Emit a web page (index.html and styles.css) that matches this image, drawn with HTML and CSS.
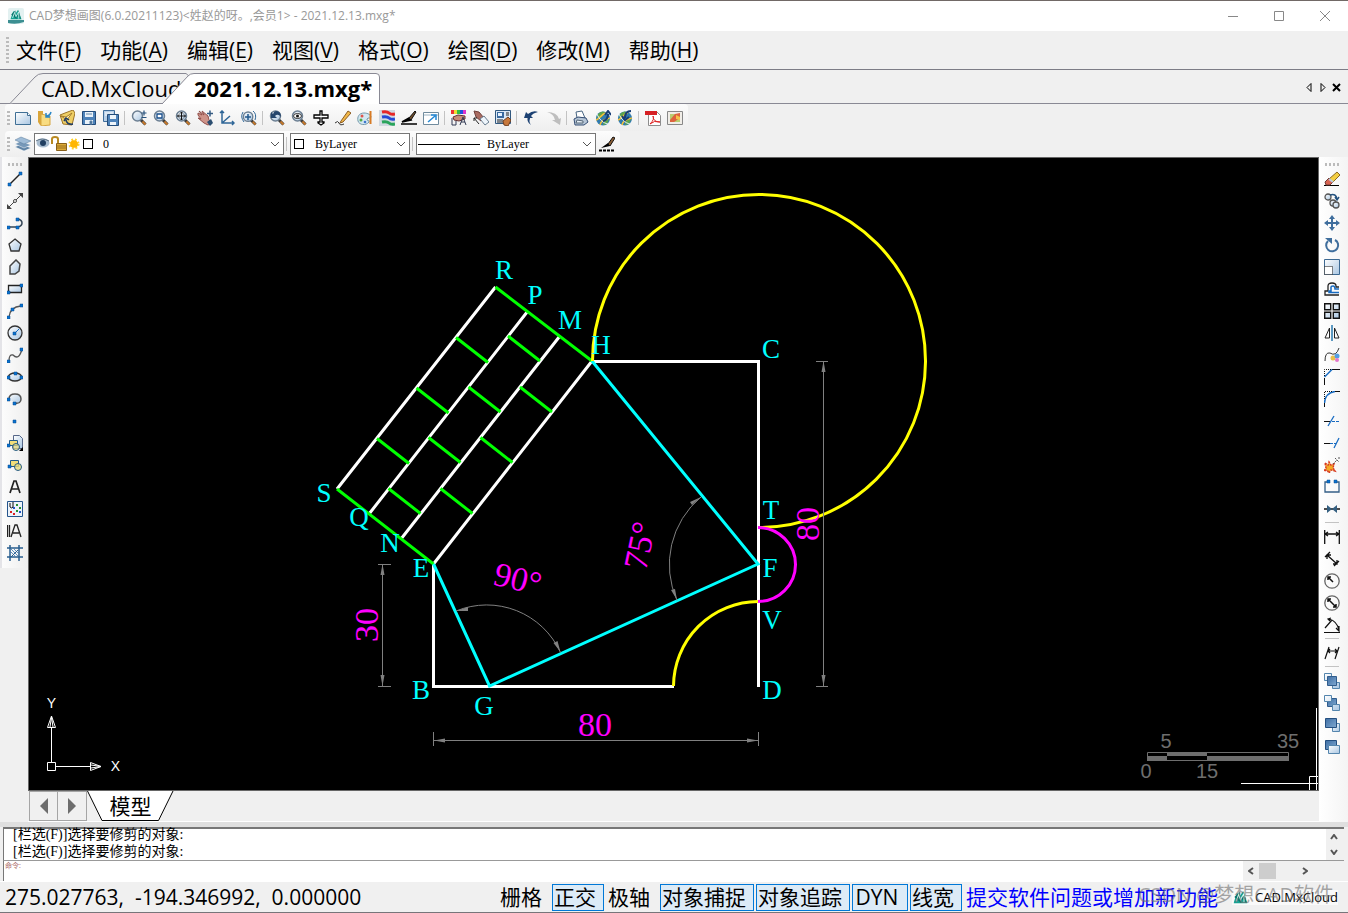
FILE: index.html
```html
<!DOCTYPE html>
<html lang="zh-CN">
<head>
    <meta charset="UTF-8">
    <meta name="viewport" content="width=device-width, initial-scale=1.0">
    <title>CAD梦想画图</title>
    <link rel="stylesheet" href="styles.css">
</head>
<body>
    <!-- shared gradients and icons -->
    <svg class="defs" aria-hidden="true">
        <defs>
            <linearGradient id="pale" x1="0" y1="0" x2="1" y2="1"><stop offset="0" stop-color="#fff"/><stop offset="1" stop-color="#a9c6e2"/></linearGradient>
            <linearGradient id="deep" x1="0" y1="0" x2="1" y2="1"><stop offset="0" stop-color="#3f6fa5"/><stop offset="1" stop-color="#7fa8d0"/></linearGradient>
            <symbol id="lens" viewBox="0 0 16 16"><path d="M9.500 9.500l5 5" stroke="#3b3b3b" stroke-width="3"/><path d="M11.500 11.500l3 3" stroke="#c77a2c" stroke-width="2"/><circle cx="6.500" cy="6" r="5" fill="url(#pale)" stroke="#6c7f92" stroke-width="1.500"/></symbol>
            <symbol id="globe" viewBox="0 0 16 16"><circle cx="8" cy="8.500" r="7" fill="#2f7bb0"/><path d="M2 5q4-5 8-3L7 7 3 9zM9 10l5-1-2 5-4 1z" fill="#5da54c"/><path d="M1 10c4-1 5-6 10-7M5 15c1-5 6-6 10-7" fill="none" stroke="#f2c13c" stroke-width="1.500"/><path d="M2 4c2 5 6 9 11 10" fill="none" stroke="#e8f3fa"/></symbol>
            <symbol id="logo" viewBox="0 0 16 16"><path d="M0 15L4 3l3 4 4-6 5 14z" fill="#16a394"/><path d="M1 8l6-6 2 13zM12 2l3 13-6-5z" fill="#0b756c"/><path d="M3 13L6 5l2 6 4-7v10" fill="none" stroke="#d8fffa" stroke-width="1.200"/></symbol>
        </defs>
    </svg>

    <div class="app">
        <header class="titlebar">
            <svg class="app-icon" viewBox="0 0 16 16"><rect width="16" height="16" rx="2" fill="#e3f1f1"/><path d="M0 12h16v2q-8 3-16 1z" fill="#3c8f92"/><use href="#logo" x="2" y="1" width="12" height="11"/></svg>
            <h1>CAD梦想画图(6.0.20211123)&lt;姓赵的呀。,会员1&gt; - 2021.12.13.mxg*</h1>
            <button aria-label="最小化"><svg viewBox="0 0 12 12"><path d="M1 6.500h10"/></svg></button>
            <button aria-label="最大化"><svg viewBox="0 0 12 12"><path d="M1.500 1.500h9v9h-9z"/></svg></button>
            <button aria-label="关闭"><svg viewBox="0 0 12 12"><path d="M1 1l10 10M11 1L1 11"/></svg></button>
        </header>

        <nav class="menubar">
            <span class="grip"></span>
            <button>文件(<u>F</u>)</button>
            <button>功能(<u>A</u>)</button>
            <button>编辑(<u>E</u>)</button>
            <button>视图(<u>V</u>)</button>
            <button>格式(<u>O</u>)</button>
            <button>绘图(<u>D</u>)</button>
            <button>修改(<u>M</u>)</button>
            <button>帮助(<u>H</u>)</button>
        </nav>

        <div class="tabbar">
            <button class="tab">
                <svg viewBox="0 0 180 31"><path d="M0 30.500L25 4Q28 .500 33 .500H176L180 4"/></svg>
                <span>CAD.MxCloud</span>
            </button>
            <button class="tab active">
                <svg viewBox="0 0 218 31"><path d="M0 31L26 3Q28 .500 32 .500H214Q217.500 .500 217.500 4V31"/></svg>
                <span>2021.12.13.mxg*</span>
            </button>
            <div class="tab-controls">
                <button aria-label="上一个"><svg viewBox="0 0 10 10"><path d="M7 1.500v8L3 5.500z"/></svg></button>
                <button aria-label="下一个"><svg viewBox="0 0 10 10"><path d="M3 1.500v8L7 5.500z"/></svg></button>
                <button aria-label="关闭标签"><svg viewBox="0 0 10 10"><path d="M1 2l7 7M8 2L1 9" stroke-width="2"/></svg></button>
            </div>
        </div>

        <div class="toolbar">
            <span class="grip"></span>
            <button class="tool" aria-label="新建"><svg viewBox="0 0 16 16"><path d="M.500 2.500h12l3 3v9H.500z" fill="url(#pale)" stroke="#3f6f95"/><path d="M12.500 2.500v3h3" fill="#fff" stroke="#3f6f95"/></svg></button>
            <button class="tool" aria-label="打开"><svg viewBox="0 0 16 16"><path d="M1 1h5v14H3l-2-3z" fill="#d9a53a"/><path d="M4 4l9 2v9l-9 1z" fill="#f8dc81" stroke="#d6a640"/><path d="M14 2q-1 4-5 4M9 3v4h4" fill="none" stroke="#2c86c5" stroke-width="1.500"/></svg></button>
            <button class="tool" aria-label="打开云图"><svg viewBox="0 0 16 16"><path d="M1 5l5-2 8-3 2 3-3 12-9-1z" fill="#efcf65" stroke="#9b7226"/><path d="M2 6l5 1 6-4-5 7z" fill="#fff1af" stroke="#a57b2d"/><path d="M14 14q-6 1-7-4M5 11l2-3 3 2" fill="none" stroke="#203c64" stroke-width="1.500"/></svg></button>
            <button class="tool" aria-label="保存"><svg viewBox="0 0 16 16"><path d="M1.500 1.500h13v13h-13z" fill="#4e83ba" stroke="#244d7b"/><path d="M4 2h8v5H4zM4 10h8v4H4z" fill="#eaf2f9"/><path d="M5 4h6M9 11h2v3H9z" stroke="#6288aa" fill="#345f8c"/></svg></button>
            <button class="tool" aria-label="全部保存"><svg viewBox="0 0 16 16"><path d="M.500 .500h11v11H.500z" fill="#b8d0e8" stroke="#3f6d9b"/><path d="M2 3h8M2 5h8" stroke="#fff"/><path d="M4.500 4.500h11v11h-11z" fill="#4e83ba" stroke="#244d7b"/><path d="M7 5h6v4H7zM7 12h6v3H7z" fill="#eef5fb"/></svg></button>
            <span class="sep"></span>
            <button class="tool" aria-label="实时缩放"><svg viewBox="0 0 16 16"><use href="#lens"/><path d="M10.500 3h5M13 .500v5M10.500 7.500h5" stroke="#27527d" stroke-width="1.200"/></svg></button>
            <button class="tool" aria-label="窗口缩放"><svg viewBox="0 0 16 16"><use href="#lens"/><path d="M4 4h5v4H4z" fill="#fff" stroke="#174d8a" stroke-width="1.300"/></svg></button>
            <button class="tool" aria-label="范围缩放"><svg viewBox="0 0 16 16"><use href="#lens"/><path d="M2.500 6h8M6.500 2v8M5 3.500L6.500 2 8 3.500M5 8.500L6.500 10 8 8.500M4 4.500L2.500 6 4 7.500M9 4.500L10.500 6 9 7.500" fill="none" stroke="#111"/></svg></button>
            <button class="tool" aria-label="平移"><svg viewBox="0 0 16 16"><path d="M1 3l4 2-3-4 5 4-2-4 6 5 1 4 3 3-4 2-4-2-6-5 3 1-3-4z" fill="#ce9389" stroke="#92504b"/><path d="M10 12l4-3 2 4-3 3z" fill="#2b4d70"/><path d="M10 3.500h6M13 .500v6" stroke="#355b82" stroke-width="1.500"/></svg></button>
            <button class="tool" aria-label="坐标系"><svg viewBox="0 0 16 16"><path d="M3 1v12h12M3 13l8-7M1 3l2-2 2 2M13 11l2 2-2 2" fill="none" stroke="#2f6697" stroke-width="1.500"/></svg></button>
            <button class="tool" aria-label="动态缩放"><svg viewBox="0 0 16 16"><use href="#lens" x="1" y="1" width="15" height="15"/><path d="M4 7h6M7 4v6" stroke="#22598d" stroke-width="1.500"/><path d="M2 2Q-1 7 3 12M12 1q4 3 2 9" fill="none" stroke="#2f6697"/></svg></button>
            <span class="sep"></span>
            <button class="tool" aria-label="上一视图"><svg viewBox="0 0 16 16"><use href="#lens"/><path d="M2 2v6h6L6 6q3-3 6 1 0-6-5-6-2 0-3 3z" fill="#25466d"/></svg></button>
            <button class="tool" aria-label="查看"><svg viewBox="0 0 16 16"><use href="#lens"/><ellipse cx="6.500" cy="6" rx="4" ry="2.500" fill="#fff" stroke="#333"/><circle cx="6.500" cy="6" r="1.500" fill="#111"/></svg></button>
            <button class="tool" aria-label="重生成"><svg viewBox="0 0 16 16"><path d="M7 1h2v4h6v3H9v4h2v1L8 15l-3-2v-1h2V8H1V5h6z" fill="#fff" stroke="#000" stroke-width="1.300"/></svg></button>
            <button class="tool" aria-label="编辑"><svg viewBox="0 0 16 16"><path d="M0 13q3-3 4 0t5 1" fill="none" stroke="#333"/><path d="M6 11L13 1l3 2-8 9-3 1z" fill="#f1b849" stroke="#8b5c22"/></svg></button>
            <button class="tool" aria-label="颜色"><svg viewBox="0 0 16 16"><path d="M7 3C2 3 0 7 1 11s8 5 11 1c1-2-3-1-2-3s4 0 4-2-3-4-7-4z" fill="#d3e7f2" stroke="#749aab"/><circle cx="5" cy="6" r="1.500" fill="#de564c"/><circle cx="4" cy="10" r="1.500" fill="#51a847"/><circle cx="8" cy="12" r="1.300" fill="#3d76ce"/><path d="M13.500 1v13" stroke="#d77b25" stroke-width="2"/></svg></button>
            <button class="tool" aria-label="图层颜色"><svg viewBox="0 0 16 16"><path d="M0 0h16v16H0z" fill="#d1d9e1"/><path d="M3 2q5-1 7 1t6 1" stroke="#e62727" stroke-width="3" fill="none"/><path d="M3 7q5-1 7 1t6 1" stroke="#2549d6" stroke-width="3" fill="none"/><path d="M3 12q5-1 7 1t6 1" stroke="#29a45b" stroke-width="3" fill="none"/></svg></button>
            <button class="tool" aria-label="线型"><svg viewBox="0 0 16 16"><path d="M0 14h16M1 12l7-4 2 2z" stroke="#000" stroke-width="1.500"/><path d="M8 8l6-7 1 1-5 8z" fill="#714d28" stroke="#111"/></svg></button>
            <button class="tool" aria-label="全屏"><svg viewBox="0 0 16 16"><path d="M.500 2.500h15v12H.500z" fill="#fff" stroke="#708b9d"/><path d="M1 5h14" stroke="#9bb2c1"/><path d="M5 12l7-6M8 5h5v5" fill="none" stroke="#2588d4" stroke-width="1.500"/></svg></button>
            <span class="sep"></span>
            <button class="tool" aria-label="文字颜色"><svg viewBox="0 0 16 16"><path d="M0 0h3v4H0z" fill="#e33"/><path d="M3 0h3v4H3z" fill="#ed3"/><path d="M6 0h3v4H6z" fill="#3b4"/><path d="M9 0h3v4H9z" fill="#25d"/><path d="M12 0h3v4h-3z" fill="#d3c"/><path d="M2 7l5-2 7 1v3l-6 2-5-1z" fill="#c98b78" stroke="#633"/><path d="M1 8v7h4v-4M9 15l3-8 3 8M10 12h4" fill="none" stroke="#333b55"/></svg></button>
            <button class="tool" aria-label="铅笔"><svg viewBox="0 0 16 16"><path d="M1 1l5 1 5 6-3 3-5-4z" fill="#aa6c61" stroke="#6f413d"/><path d="M7 9l4-3 5 6-4 3z" fill="#eef5fb" stroke="#6a7e90"/><path d="M1 8l5 6M1 8v3M1 8h3" stroke="#222" fill="none"/></svg></button>
            <button class="tool" aria-label="属性"><svg viewBox="0 0 16 16"><path d="M.500 .500h15v13H.500z" fill="#dce8f4" stroke="#315980"/><path d="M2 2h7v6H2z" fill="#38699e"/><path d="M3 3h4v3H3z" fill="#e6f2ff"/><path d="M11 3h3M11 5h3M2 10h6M2 12h6" stroke="#222"/><path d="M8 11l5-4 3 3-3 6-4-1z" fill="#c7783c" stroke="#713f20"/></svg></button>
            <span class="sep"></span>
            <button class="tool" aria-label="撤销"><svg viewBox="0 0 16 16"><path d="M1 8l2-6 2 2q5-4 10-2-5 1-7 4l2 2zM5 6h3q-3 5 0 9-5-3-3-9z" fill="#1d4273"/></svg></button>
            <button class="tool" aria-label="重做"><svg viewBox="0 0 16 16"><path d="M15 15l1-7-2 1Q12 2 2 2q7 2 8 8H7z" fill="#bebebe"/></svg></button>
            <span class="sep"></span>
            <button class="tool" aria-label="打印"><svg viewBox="0 0 16 16"><path d="M4 8L3 2l6-1 3 7z" fill="#fff" stroke="#486582"/><path d="M1 9l4-2 8 1 2 4-4 3H2z" fill="#b5c5d6" stroke="#354e74"/><path d="M4 10l6 1v2H3z" fill="#e7f0f8" stroke="#567"/></svg></button>
            <button class="tool" aria-label="云端下载"><svg viewBox="0 0 16 16"><use href="#globe"/><path d="M8 11q5-1 5-7M10 5l3-4 3 4" fill="none" stroke="#173d75" stroke-width="2"/></svg></button>
            <button class="tool" aria-label="云端上传"><svg viewBox="0 0 16 16"><use href="#globe"/><path d="M14 1q-6 0-6 7M5 6l3 4 4-3" fill="none" stroke="#173d75" stroke-width="2"/></svg></button>
            <span class="sep"></span>
            <button class="tool" aria-label="输出PDF"><svg viewBox="0 0 16 16"><path d="M3.500 1.500h8l4 4v10h-12z" fill="#fff" stroke="#8d8d8d"/><path d="M0 1h12v4H0z" fill="#d62024"/><path d="M5 14Q10 9 8 6q0 6 7 6Q9 10 5 14z" fill="none" stroke="#d22"/></svg></button>
            <button class="tool" aria-label="输出图片"><svg viewBox="0 0 16 16"><path d="M.500 1.500h15v13H.500z" fill="#f1eee8" stroke="#888"/><path d="M3 4h10v8H3z" fill="#b9cf71"/><path d="M3 10l5-6 5-1v5l-6 4H3z" fill="#dd633d"/><path d="M9 5l4 2v3L9 9z" fill="#f4c348"/></svg></button>
        </div>

        <div class="toolbar">
            <span class="grip"></span>
            <button class="tool" aria-label="图层"><svg viewBox="0 0 16 16"><path d="M0 11l6-3 10 4-7 3z" fill="#5e83a5" stroke="#fff" stroke-width=".500"/><path d="M0 8l6-3 10 4-7 3z" fill="#7799b9" stroke="#fff" stroke-width=".500"/><path d="M0 4l6-3 10 4-7 3z" fill="#9fbcd7" stroke="#587b9a" stroke-width=".500"/></svg></button>
            <span class="picker layer">
                <span class="picker-icons">
                    <svg width="14" height="14" viewBox="0 0 14 14"><ellipse cx="7" cy="6" rx="6.500" ry="4.500" fill="#a9bdd0"/><circle cx="7" cy="6" r="3" fill="#213f61"/><path d="M0 4q6-4 13 0" fill="none" stroke="#546a7e"/></svg>
                    <svg width="16" height="16" viewBox="0 0 16 16"><path d="M1 8V3q0-2 3-2t3 2v5" fill="none" stroke="#b98a22" stroke-width="2"/><path d="M5.500 7.500h10v7h-10z" fill="#dcaa36" stroke="#89611b"/><path d="M6 10h9M6 12h9" stroke="#9b701e"/></svg>
                    <svg width="12" height="12" viewBox="0 0 14 14"><circle cx="7" cy="7" r="5" fill="none" stroke="#ffd12d" stroke-width="3" stroke-dasharray="2 2"/><circle cx="7" cy="7" r="4.500" fill="#ffb600"/></svg>
                    <i class="swatch"></i>
                </span>
                <select aria-label="图层选择"><option>0</option></select>
                <svg class="chevron" viewBox="0 0 10 6"><path d="M1 1l4 4 4-4"/></svg>
            </span>
            <span class="sep"></span>
            <span class="picker color">
                <span class="picker-icons"><i class="swatch"></i></span>
                <select aria-label="颜色选择"><option>ByLayer</option></select>
                <svg class="chevron" viewBox="0 0 10 6"><path d="M1 1l4 4 4-4"/></svg>
            </span>
            <span class="sep"></span>
            <span class="picker line">
                <span class="picker-icons"><i class="rule"></i></span>
                <select aria-label="线型选择"><option>ByLayer</option></select>
                <svg class="chevron" viewBox="0 0 10 6"><path d="M1 1l4 4 4-4"/></svg>
            </span>
            <button class="tool" aria-label="线宽设置"><svg viewBox="0 0 16 16"><path d="M0 14.500h16" stroke="#000" stroke-width="2" stroke-dasharray="3 1"/><path d="M2 12l7-5 2 3z" fill="#000"/><path d="M9 8l5-7 2 1-5 8z" fill="#8b5e34" stroke="#111"/></svg></button>
        </div>

        <main class="workspace">
            <aside class="side left">
                <span class="grip"></span>
                <button class="tool" aria-label="直线"><svg viewBox="0 0 16 16"><path d="M3 13L13 3" stroke="#222" stroke-width="1.500"/><path class="node" d="M1 12h3v3H1zM12 1h3v3h-3z"/></svg></button>
                <button class="tool" aria-label="构造线"><svg viewBox="0 0 16 16"><path d="M1 15L15 1" stroke="#444"/><path d="M0 11v5h5zM11 0h5v5z" fill="#444"/><circle cx="8" cy="8" r="1.500" fill="#fff" stroke="#444"/></svg></button>
                <button class="tool" aria-label="多段线"><svg viewBox="0 0 16 16"><path d="M2 12h9q4-1 4-4t-4-4" fill="none" stroke="#345" stroke-width="1.500"/><path class="node" d="M0 11h3v3H0zM9 11h3v3H9zM9 3h3v3H9z"/></svg></button>
                <button class="tool" aria-label="正多边形"><svg viewBox="0 0 16 16"><path d="M8 2l6 5-2 7H4L2 7z" fill="url(#pale)" stroke="#333" stroke-width="1.300"/></svg></button>
                <button class="tool" aria-label="多边形"><svg viewBox="0 0 16 16"><path d="M3 7l6-6 4 4-1 7-4 3H3z" fill="url(#pale)" stroke="#444" stroke-width="1.500"/></svg></button>
                <button class="tool" aria-label="矩形"><svg viewBox="0 0 16 16"><path d="M1.500 4.500h13v7h-13z" fill="url(#pale)" stroke="#222" stroke-width="1.300"/><path class="node" d="M0 10h3v3H0zM13 3h3v3h-3z"/></svg></button>
                <button class="tool" aria-label="圆弧"><svg viewBox="0 0 16 16"><path d="M2 14Q3 4 14 3" fill="none" stroke="#555" stroke-width="1.300"/><path class="node" d="M0 13h3v3H0zM4 5h3v3H4zM13 1h3v3h-3z"/></svg></button>
                <button class="tool" aria-label="圆"><svg viewBox="0 0 16 16"><circle cx="8" cy="8" r="7" fill="url(#pale)" stroke="#333" stroke-width="1.300"/><path d="M8 8l4-4" stroke="#136ac1"/><path class="node" d="M6 7h3v3H6z"/></svg></button>
                <button class="tool" aria-label="样条曲线"><svg viewBox="0 0 16 16"><path d="M2 14q0-7 4-6 6 6 9-6" fill="none" stroke="#555" stroke-width="1.300"/><path class="node" d="M0 13h3v3H0zM13 1h3v3h-3z"/></svg></button>
                <button class="tool" aria-label="椭圆"><svg viewBox="0 0 16 16"><ellipse cx="8" cy="8" rx="6.500" ry="4" fill="url(#pale)" stroke="#333" stroke-width="1.500"/><path class="node" d="M0 7h3v3H0zM13 7h3v3h-3zM7 3h3v3H7z"/></svg></button>
                <button class="tool" aria-label="椭圆弧"><svg viewBox="0 0 16 16"><path d="M2 8q0-5 6-5t6 5-6 4" fill="url(#pale)" stroke="#555" stroke-width="1.500"/><path class="node" d="M0 7h3v3H0zM6 11h3v3H6z"/></svg></button>
                <button class="tool" aria-label="点"><svg viewBox="0 0 16 16"><path class="node" d="M6 7h3v3H6z"/></svg></button>
                <button class="tool" aria-label="插入块"><svg viewBox="0 0 16 16"><path d="M6.500 .500h6l3 3v10h-9z" fill="url(#pale)" stroke="#568"/><path d="M2.500 5.500h8v5h-8z" fill="#f2df79" stroke="#235b86"/><circle cx="9" cy="12" r="3.500" fill="#e9dc79" fill-opacity=".7" stroke="#235b86"/><path class="node" d="M0 9h3v3H0z"/><path d="M16 12v4h-4z"/></svg></button>
                <button class="tool" aria-label="创建块"><svg viewBox="0 0 16 16"><path d="M3.500 3.500h8v6h-8z" fill="#f2df79" stroke="#235b86"/><circle cx="11" cy="10" r="3.500" fill="#e9dc79" fill-opacity=".8" stroke="#235b86"/><path class="node" d="M1 8h3v3H1z"/></svg></button>
                <button class="tool" aria-label="文字"><svg viewBox="0 0 16 16"><path d="M3 14L7 2h2l4 12M5 10h6" fill="none" stroke="#222" stroke-width="1.700"/></svg></button>
                <button class="tool" aria-label="填充"><svg viewBox="0 0 16 16"><path d="M.500 .500h15v15H.500z" fill="#edf3fa" stroke="#24558c"/><path d="M3 2v4q2 2 3 0V1" fill="none" stroke="#111"/><path d="M9 3h2v2H9zM12 6h2v2h-2zM9 9h2v2H9z" fill="#279032"/><path d="M6 6h2v2H6zM12 10h2v2h-2z" fill="#2457c5"/><path d="M3 10h2v2H3zM6 12h2v2H6z" fill="#db2020"/></svg></button>
                <button class="tool" aria-label="单行文字"><svg viewBox="0 0 16 16"><path d="M.500 2v12M2.500 2v12M4 14L8 2h2l4 12M6 10h6" fill="none" stroke="#222" stroke-width="1.300"/></svg></button>
                <button class="tool" aria-label="面域"><svg viewBox="0 0 16 16"><path d="M3 0v16M12 0v16M0 3h16M0 12h16" stroke="#285d8e" stroke-width="1.500"/><path d="M4 7l4 4M4 4l7 7M7 4l4 4" stroke="#6390bd"/><path d="M11 5L4 12" stroke="#285d8e"/></svg></button>
            </aside>

            <section class="drawing">
                <svg class="canvas" viewBox="29 158 1289 632">
                    <g class="white">
                        <path d="M592 361.500H758.500V687M674 686.500H433.500V564"/>
                        <path d="M495.500 287L337 489M527.500 311.500L369 514M559.500 336.500L401 539M592 361L433.500 564"/>
                    </g>
                    <g class="green">
                        <path d="M495.500 287L592 361M337 489L433.500 564"/>
                        <path d="M456 337.500l32 25M416.500 388l32 25M377 438.500l32 25"/>
                        <path d="M508 336l32 25M468.500 387l32 25M428.500 437.500l32 25M388.500 488.500l32 25"/>
                        <path d="M520 387l32 25M480.500 437.500l32 25M440.500 488.500l32 25"/>
                    </g>
                    <path class="cyan" d="M433.500 564L489.500 686L758 564L592 361"/>
                    <path class="yellow" d="M592.500 361A166.500 166.500 0 1 1 758 527.500"/>
                    <path class="yellow" d="M673.500 686A85 85 0 0 1 758 601.500"/>
                    <path class="magenta" d="M758 527.500A37.500 37 0 0 1 758 601.500"/>

                    <g class="dims">
                        <path d="M382.500 564V686M378 564.500h13M378 686.500h13"/>
                        <path d="M433.500 740.500H758.500M433.500 732v14M758.500 732v14"/>
                        <path d="M823.500 361V686M816 361.500h12M816 686.500h12"/>
                        <path d="M456 611A81 81 0 0 1 560.500 652.500"/>
                        <path d="M701 497A88 88 0 0 0 677 600.500"/>
                        <path class="arrow" d="M382.500 564l2 11h-4zM382.500 686l2-11h-4zM823.500 361l2 11h-4zM823.500 686l2-11h-4zM434 740.500l11-2v4zM758 740.500l-11-2v4zM456 611l12-4v4zM560.500 652l-7-9 4-2zM701 497l-9 8-2-3zM677 600l-6-10 4-1z"/>
                    </g>
                    <g class="dim-text">
                        <text x="595" y="736">80</text>
                        <text transform="translate(378 625) rotate(-90)">30</text>
                        <text transform="translate(819 524) rotate(-90)">80</text>
                        <text transform="translate(515 590) rotate(14)">90°</text>
                        <text transform="translate(651 548) rotate(-78)">75°</text>
                    </g>
                    <g class="labels">
                        <text x="504" y="279">R</text>
                        <text x="535" y="304">P</text>
                        <text x="570" y="329">M</text>
                        <text x="601" y="354">H</text>
                        <text x="771" y="358">C</text>
                        <text x="771" y="519">T</text>
                        <text x="770" y="577">F</text>
                        <text x="772" y="629">V</text>
                        <text x="772" y="699">D</text>
                        <text x="324" y="502">S</text>
                        <text x="359" y="526">Q</text>
                        <text x="390" y="552">N</text>
                        <text x="421" y="577">E</text>
                        <text x="421" y="699">B</text>
                        <text x="484" y="715">G</text>
                    </g>

                    <g class="ucs">
                        <path d="M47.500 762.500h8v8h-8zM51.500 762V727M56 766.500H90M47.500 727.500h8L51.500 716zM50 727l1.500-10 1.500 10M90.500 762.500v8L101 766.500zM91 765l10 1.500-10 1.500"/>
                        <text x="51.500" y="708">Y</text>
                        <text x="115.500" y="771">X</text>
                    </g>

                    <g class="scale">
                        <path d="M1147.500 752.500h141v8h-141z" fill="none" stroke="#6e6e6e"/>
                        <path d="M1147 756h20v5h-20zM1167 752h40v4h-40zM1207 756h82v5h-82z"/>
                        <text x="1166" y="748">5</text>
                        <text x="1288" y="748">35</text>
                        <text x="1146" y="778">0</text>
                        <text x="1207" y="778">15</text>
                    </g>
                    <path class="cursor" d="M1316.500 708V790M1241 783.500H1318M1318 776.500h-8.500V790"/>
                </svg>
                <div class="sheets">
                    <button class="step" aria-label="上一布局"><svg viewBox="0 0 10 16"><path d="M9 0v16L1 8z"/></svg></button>
                    <button class="step" aria-label="下一布局"><svg viewBox="0 0 10 16"><path d="M1 0v16l8-8z"/></svg></button>
                    <button class="sheet"><svg viewBox="0 0 87 30"><path d="M.500 0L15 29.500H71.500L86 0"/></svg><span>模型</span></button>
                </div>
            </section>

            <aside class="side right">
                <span class="grip"></span>
                <button class="tool" aria-label="删除"><svg viewBox="0 0 16 16"><path d="M0 14.500h15" stroke="#000"/><path d="M5 8l8-7 3 3-8 8z" fill="#f3ce42" stroke="#8b6a22"/><path d="M1 11l4-4 4 4-3 3H2z" fill="#d86452" stroke="#713c36"/><path d="M5 8l4 3" stroke="#bcd" stroke-width="2"/></svg></button>
                <button class="tool" aria-label="复制"><svg viewBox="0 0 16 16"><circle cx="4" cy="4" r="3" fill="url(#pale)" stroke="#555" stroke-width="1.300"/><circle cx="9" cy="10" r="3" fill="url(#pale)" stroke="#555" stroke-width="1.300"/><circle cx="12" cy="12" r="3" fill="url(#pale)" stroke="#555" stroke-width="1.300"/><path d="M6 2q6-2 7 4M11 4l2 3 2-3" fill="none" stroke="#24527f" stroke-width="1.500"/></svg></button>
                <button class="tool" aria-label="移动"><svg viewBox="0 0 16 16"><path d="M2 8h12M8 2v12" stroke="#3f6e9d" stroke-width="2"/><path d="M8 0l3 4H5zM8 16l3-4H5zM0 8l4-3v6zM16 8l-4-3v6z" fill="#3f6e9d"/></svg></button>
                <button class="tool" aria-label="旋转"><svg viewBox="0 0 16 16"><path d="M4 4a6 6 0 1 0 7-1" fill="none" stroke="#3f6e9d" stroke-width="2"/><path d="M1 1h7v6z" fill="#3f6e9d"/></svg></button>
                <button class="tool" aria-label="缩放"><svg viewBox="0 0 16 16"><path d="M.500 .500h15v15H.500z" fill="url(#pale)" stroke="#3d6992"/><path d="M.500 7.500h8v8h-8z" fill="#fff" stroke="#111" stroke-dasharray="1 1"/></svg></button>
                <button class="tool" aria-label="偏移"><svg viewBox="0 0 16 16"><path d="M15 14H1v-4h3V5q0-3 4-3t4 3v1h3" fill="none" stroke="#222" stroke-width="1.300"/><path d="M15 11.500H5V10h2V6q0-1 2-1t2 3h4" fill="none" stroke="#176bc1" stroke-width="1.500"/></svg></button>
                <button class="tool" aria-label="阵列"><svg viewBox="0 0 16 16"><path d="M.700 .700h6v6h-6zM9.300 .700h6v6h-6zM.700 9.300h6v6h-6zM9.300 9.300h6v6h-6z" fill="url(#pale)" stroke="#111" stroke-width="1.400"/></svg></button>
                <button class="tool" aria-label="镜像"><svg viewBox="0 0 16 16"><path d="M5.500 3v10H1zM10.500 3v10H15z" fill="#fff" stroke="#222"/><path d="M8 0v16" stroke="#2978ae" stroke-width="1.500"/></svg></button>
                <button class="tool" aria-label="编辑曲线"><svg viewBox="0 0 16 16"><path d="M1 14q0-9 5-8 6 4 9-5" fill="none" stroke="#333"/><circle cx="9" cy="11" r="2.500" fill="#e9bf49"/><circle cx="13" cy="9" r="2.500" fill="#549fe1"/><circle cx="13" cy="13" r="2" fill="#e277cb"/></svg></button>
                <button class="tool" aria-label="倒角"><svg viewBox="0 0 16 16"><path d="M.500 16V9M8 .500h8" stroke="#111"/><path d="M.500 8L8 .500" stroke="#176bc1" stroke-width="1.500"/><path d="M.500 7V.500H8" fill="none" stroke="#111" stroke-dasharray="1 1"/></svg></button>
                <button class="tool" aria-label="圆角"><svg viewBox="0 0 16 16"><path d="M.500 16V11M11 .500h5" stroke="#111"/><path d="M.500 12Q1 2 11 .500" fill="none" stroke="#176bc1" stroke-width="1.500"/><path d="M.500 8V.500H8" fill="none" stroke="#111" stroke-dasharray="1 1"/></svg></button>
                <button class="tool" aria-label="修剪"><svg viewBox="0 0 16 16"><path d="M0 8.500h6" stroke="#111"/><path d="M8 8.500h8" stroke="#176bc1" stroke-dasharray="3 1"/><path d="M4 13l6-10" stroke="#176bc1" stroke-width="1.300"/></svg></button>
                <button class="tool" aria-label="延伸"><svg viewBox="0 0 16 16"><path d="M0 8.500h6" stroke="#111"/><path d="M6 8.500h6" stroke="#176bc1" stroke-dasharray="3 1"/><path d="M10 13l5-10" stroke="#176bc1" stroke-width="1.300"/></svg></button>
                <button class="tool" aria-label="分解"><svg viewBox="0 0 16 16"><path d="M1 6l3 2 1-3 2 3 3-1-1 4 2 3-4-1-2 3-2-3-3 1 2-3z" fill="#f4aa29" stroke="#d73922" stroke-width="1.500" stroke-dasharray="2 1"/><path d="M9 7l4-4M11 1l4 4M15 0v2" stroke="#555" stroke-dasharray="2 1"/></svg></button>
                <button class="tool" aria-label="打断"><svg viewBox="0 0 16 16"><path d="M5 3H1v10h14V3h-4" fill="none" stroke="#345f87" stroke-width="1.300"/><path class="node" d="M3 1h3v3H3zM10 1h3v3h-3z"/></svg></button>
                <button class="tool" aria-label="合并"><svg viewBox="0 0 16 16"><path d="M0 8h16" stroke="#111" stroke-width="1.500"/><path d="M3 4l5 4-5 4zM13 4L8 8l5 4z" fill="#345f80"/></svg></button>
                <span class="sep"></span>
                <button class="tool" aria-label="线性标注"><svg viewBox="0 0 16 16"><path d="M.700 1v14M15.300 1v14M1 5h14M4 3L1 5l3 2M12 3l3 2-3 2" fill="none" stroke="#111" stroke-width="1.300"/></svg></button>
                <button class="tool" aria-label="对齐标注"><svg viewBox="0 0 16 16"><path d="M1 6l5-5M10 15l5-5M3 4l10 9M3 8V4h4M9 13h4V9" fill="none" stroke="#111" stroke-width="1.300"/></svg></button>
                <button class="tool" aria-label="半径标注"><svg viewBox="0 0 16 16"><circle cx="8" cy="8" r="7.200" fill="none" stroke="#666" stroke-width="1.300"/><path d="M9 9L4 4M4 7V4h3" fill="none" stroke="#111" stroke-width="1.500"/></svg></button>
                <button class="tool" aria-label="直径标注"><svg viewBox="0 0 16 16"><circle cx="8" cy="8" r="7.200" fill="none" stroke="#666" stroke-width="1.300"/><path d="M4 4l8 8M4 7V4h3M9 12h3V9" fill="none" stroke="#111" stroke-width="1.500"/></svg></button>
                <button class="tool" aria-label="角度标注"><svg viewBox="0 0 16 16"><path d="M0 15.500h16M1 11L8 3M5 2q8 2 10 11M7 1L4 2l3 3M12 11l3 3V9" fill="none" stroke="#111" stroke-width="1.200"/></svg></button>
                <span class="sep"></span>
                <button class="tool" aria-label="编辑标注"><svg viewBox="0 0 16 16"><path d="M1 14L5 2M11 14l4-12M4 6h9M6 4L4 6l2 2M11 4l2 2-2 2" fill="none" stroke="#111" stroke-width="1.200"/></svg></button>
                <span class="sep"></span>
                <button class="tool" aria-label="前置"><svg viewBox="0 0 16 16"><path d="M.500 .500h7v7h-7zM8.500 9.500h7v6h-7z" fill="url(#pale)" stroke="#5485ad"/><path d="M3.500 3.500h9v9h-9z" fill="url(#deep)" stroke="#315d8d"/></svg></button>
                <button class="tool" aria-label="后置"><svg viewBox="0 0 16 16"><path d="M3.500 3.500h9v8h-9z" fill="url(#deep)" stroke="#315d8d"/><path d="M.500 .500h7v6h-7zM8.500 9.500h7v6h-7z" fill="url(#pale)" stroke="#5485ad"/></svg></button>
                <button class="tool" aria-label="置于之上"><svg viewBox="0 0 16 16"><path d="M8.500 6.500h7v8h-7z" fill="url(#pale)" stroke="#5485ad"/><path d="M1.500 1.500h11v9h-11z" fill="url(#deep)" stroke="#244f80"/></svg></button>
                <button class="tool" aria-label="置于之下"><svg viewBox="0 0 16 16"><path d="M1.500 1.500h11v9h-11z" fill="url(#deep)" stroke="#244f80"/><path d="M4.500 6.500h11v8h-11z" fill="url(#pale)" stroke="#5485ad"/></svg></button>
            </aside>
        </main>

        <section class="command">
            <div class="history">
                <div class="log">
                    <p>[栏选(F)]选择要修剪的对象:</p>
                    <p>[栏选(F)]选择要修剪的对象:</p>
                </div>
                <div class="vscroll">
                    <button aria-label="向上滚动"><svg viewBox="0 0 8 6"><path d="M1 5l3-4 3 4"/></svg></button>
                    <button aria-label="向下滚动"><svg viewBox="0 0 8 6"><path d="M1 1l3 4 3-4"/></svg></button>
                </div>
            </div>
            <div class="prompt">
                <label for="command">命令:</label>
                <input id="command" type="text">
                <div class="hscroll">
                    <button aria-label="向左滚动"><svg viewBox="0 0 6 8"><path d="M5 1L1 4l4 3"/></svg></button>
                    <span class="thumb"></span>
                    <button aria-label="向右滚动"><svg viewBox="0 0 6 8"><path d="M1 1l4 3-4 3"/></svg></button>
                </div>
            </div>
        </section>

        <footer class="status">
            <output class="coords">275.027763,&nbsp; -194.346992,&nbsp; 0.000000</output>
            <button>栅格</button>
            <button class="on">正交</button>
            <button>极轴</button>
            <button class="on">对象捕捉</button>
            <button class="on">对象追踪</button>
            <button class="on dyn">DYN</button>
            <button class="on">线宽</button>
            <div class="support">
                <a href="#feedback">提交软件问题或增加新功能</a>
                <span class="brand"><svg viewBox="0 0 16 16"><use href="#logo"/></svg>CAD.MxCloud</span>
                <span class="watermark">CSDN @梦想CAD软件</span>
            </div>
        </footer>
    </div>
</body>
</html>
```
FILE: styles.css
```css
* {
    box-sizing: border-box;
}
body {
    margin: 0;
    background-color: #f0f0f0;
    color: #000;
    font-family: "Open Sans", "Noto Sans CJK SC", sans-serif;
    font-size: 21px;
}
button {
    margin: 0;
    padding: 0;
    border: none;
    background: none;
    color: inherit;
    font: inherit;
}
svg {
    display: block;
}
.defs {
    position: absolute;
    width: 0;
    height: 0;
}
.app {
    display: flex;
    flex-direction: column;
    min-height: 100vh;
    border-bottom: 1px solid #77757a;
}

/* title bar */
.titlebar {
    display: flex;
    align-items: center;
    height: 31px;
    padding-left: 8px;
    border-top: 1px solid #716966;
    background-color: #fff;
    color: #999;
}
.app-icon {
    width: 16px;
    height: 16px;
}
.titlebar h1 {
    flex: 1;
    margin: 0 0 0 5px;
    font-size: 12px;
    font-weight: normal;
    line-height: 30px;
}
.titlebar button {
    display: flex;
    justify-content: center;
    width: 46px;
}
.titlebar button svg {
    width: 12px;
    height: 12px;
    fill: none;
    stroke: #888;
}

/* menu */
.menubar {
    display: flex;
    align-items: center;
    gap: 19px;
    height: 38px;
    padding-left: 6px;
}
.menubar button {
    line-height: 38px;
    white-space: nowrap;
}
.menubar u {
    text-decoration-thickness: 1px;
    text-underline-offset: 3px;
}
.grip {
    width: 3px;
    height: 14px;
    margin: 0 2px;
    background: repeating-linear-gradient(#bbb 0 2px, transparent 2px 4px);
}
.menubar .grip {
    height: 26px;
    margin: 0 -12px 0 0;
}

/* document tabs */
.tabbar {
    display: flex;
    align-items: flex-end;
    height: 35px;
    padding-left: 10px;
    border-top: 1px solid #7c7c86;
    box-shadow: inset 0 -1px #898994;
    font-size: 22px;
}
.tab {
    position: relative;
    width: 180px;
    height: 31px;
    padding-left: 31px;
    text-align: left;
    line-height: 29px;
    white-space: nowrap;
}
.tab svg {
    position: absolute;
    top: 0;
    left: 0;
    width: 100%;
    height: 31px;
    fill: #f0f0f0;
    stroke: #898994;
}
.tab span {
    position: relative;
}
.tab.active {
    width: 218px;
    margin-left: -28px;
    padding-left: 32px;
    font-weight: bold;
}
.tab.active svg {
    fill: #fff;
}
.tab-controls {
    display: flex;
    gap: 4px;
    margin: 0 6px 12px auto;
}
.tab-controls svg {
    width: 10px;
    height: 10px;
    fill: none;
    stroke: #000;
}

/* toolbars */
.toolbar {
    display: flex;
    align-items: center;
    align-self: flex-start;
    height: 27px;
    margin-left: 5px;
    padding-right: 2px;
    border-radius: 4px;
    background: linear-gradient(#fcfcfc, #eeeeee);
}
.toolbar + .toolbar {
    height: 26px;
}
.tool {
    display: flex;
    align-items: center;
    justify-content: center;
    width: 22px;
    height: 22px;
}
.tool svg {
    width: 16px;
    height: 16px;
}
.node {
    fill: #0873d0;
    stroke: #084b8c;
    stroke-width: 0.5px;
}
.sep {
    width: 2px;
    height: 14px;
    margin: 0 2px;
    border-left: 1px solid #c3c3c3;
}
.picker {
    position: relative;
    height: 22px;
}
.picker select {
    display: block;
    width: 100%;
    height: 22px;
    margin: 0;
    padding: 0 20px 0 24px;
    border: 1px solid #777;
    border-radius: 0;
    background-color: #fff;
    color: #000;
    font-family: "Liberation Serif", serif;
    font-size: 12px;
    appearance: none;
}
.picker.layer {
    width: 250px;
}
.picker.layer select {
    padding-left: 68px;
}
.picker.color {
    width: 120px;
}
.picker.line {
    width: 180px;
}
.picker.line select {
    padding-left: 70px;
}
.picker-icons {
    position: absolute;
    top: 3px;
    left: 2px;
    display: flex;
    align-items: center;
    gap: 1px;
    height: 16px;
    pointer-events: none;
}
.swatch {
    width: 10px;
    height: 10px;
    margin: 0 2px;
    border: 1px solid #000;
}
.rule {
    width: 62px;
    border-top: 1px solid #000;
}
.chevron {
    position: absolute;
    top: 8px;
    right: 4px;
    width: 10px;
    height: 6px;
    fill: none;
    stroke: #555;
    pointer-events: none;
}

/* drawing area */
.workspace {
    display: flex;
    flex: 1;
}
.side {
    display: flex;
    flex-direction: column;
    align-items: center;
    align-self: flex-start;
    width: 28px;
    padding-top: 5px;
    padding-bottom: 4px;
    border-left: 2px solid #e4e4e8;
    background: linear-gradient(to right, #fcfcfc, #eeeeee);
}
.side.right {
    align-self: stretch;
    width: 29px;
    padding-right: 3px;
    border-left: none;
    background: linear-gradient(to right, #fff, #f4f4f4);
}
.side .grip {
    width: 14px;
    height: 3px;
    margin: 1px 0 2px;
    background: repeating-linear-gradient(to right, #bbb 0 2px, transparent 2px 4px);
}
.side .sep {
    width: 14px;
    height: 2px;
    margin: 2px 0;
    border-left: none;
    border-top: 1px solid #c3c3c3;
}
.drawing {
    display: flex;
    flex: 1;
    flex-direction: column;
    min-width: 0;
}
.canvas {
    flex: 1;
    width: 100%;
    min-height: 0;
    border: 1px solid #666;
    background-color: #000;
    fill: none;
}
.white, .green, .cyan, .yellow, .magenta {
    stroke-width: 3px;
}
.white {
    stroke: #fff;
}
.green {
    stroke: #0f0;
}
.cyan {
    stroke: #0ff;
}
.yellow {
    stroke: #ff0;
}
.magenta {
    stroke: #f0f;
}
.dims {
    stroke: #808080;
}
.arrow {
    fill: #808080;
    stroke: none;
}
.dim-text, .labels {
    font-family: "Liberation Serif", serif;
    text-anchor: middle;
}
.dim-text {
    fill: #f0f;
    font-size: 34px;
}
.labels {
    fill: #0ff;
    font-size: 27px;
}
.ucs {
    stroke: #fff;
    font-family: "Liberation Sans", sans-serif;
    font-size: 14px;
    text-anchor: middle;
}
.ucs text {
    fill: #fff;
    stroke: none;
}
.scale {
    fill: #6e6e6e;
    font-family: "Liberation Sans", sans-serif;
    font-size: 20px;
    text-anchor: middle;
}
.cursor {
    stroke: #fff;
}
.sheets {
    display: flex;
    height: 31px;
    padding-left: 1px;
    border-bottom: 1px solid #fff;
}
.step {
    display: flex;
    align-items: center;
    justify-content: center;
    width: 29px;
    height: 30px;
    border: 1px solid #a5a5a5;
}
.step + .step {
    border-left: none;
}
.step svg {
    width: 10px;
    height: 16px;
    fill: #6d6d6d;
}
.sheet {
    position: relative;
    width: 87px;
    height: 30px;
    line-height: 30px;
}
.sheet svg {
    position: absolute;
    top: 0;
    left: 0;
    width: 87px;
    height: 30px;
    fill: #fff;
    stroke: #000;
}
.sheet span {
    position: relative;
}

/* command line */
.command {
    padding: 0 4px 0 3px;
    border-top: 5px solid #dfdfdf;
}
.history {
    display: flex;
    height: 34px;
    border-top: 2px solid #777;
    border-left: 1px solid #777;
    border-bottom: 1px solid #999;
    background-color: #fff;
}
.log {
    flex: 1;
    padding-left: 9px;
    font-family: "Liberation Serif", "Noto Sans CJK SC", serif;
    font-size: 14px;
}
.log p {
    height: 17px;
    margin: 0;
    line-height: 12px;
}
.vscroll {
    display: flex;
    flex-direction: column;
    width: 18px;
    padding-right: 2px;
    background-color: #f0f0f0;
}
.vscroll button {
    display: flex;
    flex: 1;
    align-items: center;
    justify-content: center;
}
.vscroll svg {
    width: 8px;
    height: 6px;
}
.vscroll svg, .hscroll svg {
    fill: none;
    stroke: #555;
    stroke-width: 2px;
}
.prompt {
    display: flex;
    height: 20px;
    padding-right: 30px;
    border-left: 1px solid #777;
    background-color: #f0f0f0;
}
.prompt label {
    padding-left: 1px;
    background-color: #fff;
    color: #a66;
    font-size: 7px;
    line-height: 10px;
}
.prompt input {
    flex: 1;
    min-width: 0;
    border: none;
    background-color: #fff;
    font-size: 12px;
}
.hscroll {
    display: flex;
    width: 71px;
    height: 18px;
    padding-top: 2px;
}
.hscroll button {
    display: flex;
    align-items: center;
    justify-content: center;
    width: 16px;
}
.hscroll svg {
    width: 6px;
    height: 8px;
}
.hscroll .thumb {
    width: 17px;
    margin-right: 21px;
    background-color: #cdcdcd;
}

/* status bar */
.status {
    display: flex;
    align-items: center;
    gap: 2px;
    height: 31px;
    padding-left: 5px;
    border-top: 1px solid #fff;
    white-space: nowrap;
}
.coords {
    flex: 1;
    line-height: 27px;
}
.status button {
    height: 27px;
    padding: 0 7px 0 1px;
    border: 1px solid transparent;
    line-height: 25px;
}
.status .on {
    border-color: #0078d7;
    background-color: #dcebf7;
}
.status .dyn {
    width: 56px;
}
.support {
    position: relative;
    display: flex;
    align-items: center;
    justify-content: space-between;
    width: 384px;
    padding: 0 10px 0 2px;
}
.support a {
    color: #00f;
    line-height: 27px;
    text-decoration: none;
}
.brand {
    display: flex;
    align-items: center;
    gap: 6px;
    background-color: #fafafa;
    font-size: 13px;
    line-height: 15px;
}
.brand svg {
    width: 17px;
    height: 14px;
}
.watermark {
    position: absolute;
    top: 0;
    right: 14px;
    color: rgba(110, 110, 110, 0.6);
    font-size: 20px;
    line-height: 22px;
    pointer-events: none;
}
```
